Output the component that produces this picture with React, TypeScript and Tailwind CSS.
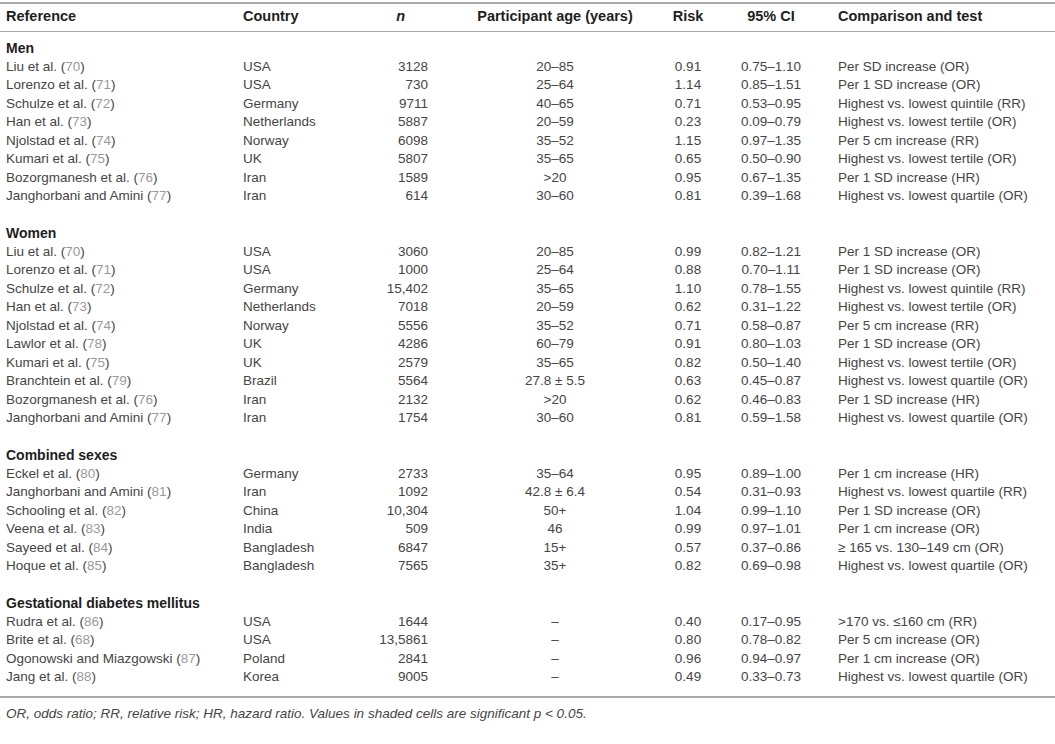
import React from "react";

type Row = [string, string, string, string, string, string, string, string];

const sections: { title: string; rows: Row[] }[] = [
  {
    title: "Men",
    rows: [
      ["Liu et al.", "70", "USA", "3128", "20–85", "0.91", "0.75–1.10", "Per SD increase (OR)"],
      ["Lorenzo et al.", "71", "USA", "730", "25–64", "1.14", "0.85–1.51", "Per 1 SD increase (OR)"],
      ["Schulze et al.", "72", "Germany", "9711", "40–65", "0.71", "0.53–0.95", "Highest vs. lowest quintile (RR)"],
      ["Han et al.", "73", "Netherlands", "5887", "20–59", "0.23", "0.09–0.79", "Highest vs. lowest tertile (OR)"],
      ["Njolstad et al.", "74", "Norway", "6098", "35–52", "1.15", "0.97–1.35", "Per 5 cm increase (RR)"],
      ["Kumari et al.", "75", "UK", "5807", "35–65", "0.65", "0.50–0.90", "Highest vs. lowest tertile (OR)"],
      ["Bozorgmanesh et al.", "76", "Iran", "1589", ">20", "0.95", "0.67–1.35", "Per 1 SD increase (HR)"],
      ["Janghorbani and Amini", "77", "Iran", "614", "30–60", "0.81", "0.39–1.68", "Highest vs. lowest quartile (OR)"],
    ],
  },
  {
    title: "Women",
    rows: [
      ["Liu et al.", "70", "USA", "3060", "20–85", "0.99", "0.82–1.21", "Per 1 SD increase (OR)"],
      ["Lorenzo et al.", "71", "USA", "1000", "25–64", "0.88", "0.70–1.11", "Per 1 SD increase (OR)"],
      ["Schulze et al.", "72", "Germany", "15,402", "35–65", "1.10", "0.78–1.55", "Highest vs. lowest quintile (RR)"],
      ["Han et al.", "73", "Netherlands", "7018", "20–59", "0.62", "0.31–1.22", "Highest vs. lowest tertile (OR)"],
      ["Njolstad et al.", "74", "Norway", "5556", "35–52", "0.71", "0.58–0.87", "Per 5 cm increase (RR)"],
      ["Lawlor et al.", "78", "UK", "4286", "60–79", "0.91", "0.80–1.03", "Per 1 SD increase (OR)"],
      ["Kumari et al.", "75", "UK", "2579", "35–65", "0.82", "0.50–1.40", "Highest vs. lowest tertile (OR)"],
      ["Branchtein et al.", "79", "Brazil", "5564", "27.8 ± 5.5", "0.63", "0.45–0.87", "Highest vs. lowest quartile (OR)"],
      ["Bozorgmanesh et al.", "76", "Iran", "2132", ">20", "0.62", "0.46–0.83", "Per 1 SD increase (HR)"],
      ["Janghorbani and Amini", "77", "Iran", "1754", "30–60", "0.81", "0.59–1.58", "Highest vs. lowest quartile (OR)"],
    ],
  },
  {
    title: "Combined sexes",
    rows: [
      ["Eckel et al.", "80", "Germany", "2733", "35–64", "0.95", "0.89–1.00", "Per 1 cm increase (HR)"],
      ["Janghorbani and Amini", "81", "Iran", "1092", "42.8 ± 6.4", "0.54", "0.31–0.93", "Highest vs. lowest quartile (RR)"],
      ["Schooling et al.", "82", "China", "10,304", "50+", "1.04", "0.99–1.10", "Per 1 SD increase (OR)"],
      ["Veena et al.", "83", "India", "509", "46", "0.99", "0.97–1.01", "Per 1 cm increase (OR)"],
      ["Sayeed et al.", "84", "Bangladesh", "6847", "15+", "0.57", "0.37–0.86", "≥ 165 vs. 130–149 cm (OR)"],
      ["Hoque et al.", "85", "Bangladesh", "7565", "35+", "0.82", "0.69–0.98", "Highest vs. lowest quartile (OR)"],
    ],
  },
  {
    title: "Gestational diabetes mellitus",
    rows: [
      ["Rudra et al.", "86", "USA", "1644", "–", "0.40", "0.17–0.95", ">170 vs. ≤160 cm (RR)"],
      ["Brite et al.", "68", "USA", "13,5861", "–", "0.80", "0.78–0.82", "Per 5 cm increase (OR)"],
      ["Ogonowski and Miazgowski", "87", "Poland", "2841", "–", "0.96", "0.94–0.97", "Per 1 cm increase (OR)"],
      ["Jang et al.", "88", "Korea", "9005", "–", "0.49", "0.33–0.73", "Highest vs. lowest quartile (OR)"],
    ],
  },
];

// row pitch in the reference is ~18.5px
const cell = "h-[18.5px] p-0 leading-[18.5px] align-middle whitespace-nowrap";

export default function App() {
  return (
    <div className="w-[1055px] h-[744px] bg-white pt-[2px] text-[13.5px] text-[#454545] font-['Liberation_Sans',Arial,sans-serif]">
      <table className="w-[1055px] table-fixed border-collapse">
        <colgroup>
          <col className="w-[237px]" />
          <col className="w-[103px]" />
          <col className="w-[120px]" />
          <col className="w-[190px]" />
          <col className="w-[76px]" />
          <col className="w-[90px]" />
          <col className="w-[239px]" />
        </colgroup>
        <thead>
          <tr className="h-[28px] border-t-2 border-b border-[#a9a9a9] font-bold text-[14.5px] text-[#1e1e1e] leading-[18px]">
            <th className="p-0 pb-[3px] pl-[6px] text-left">Reference</th>
            <th className="p-0 pb-[3px] pl-[6px] text-left">Country</th>
            <th className="p-0 pb-[3px] pr-[55px] text-right italic">n</th>
            <th className="p-0 pb-[3px] text-center">Participant age (years)</th>
            <th className="p-0 pb-[3px] text-center">Risk</th>
            <th className="p-0 pb-[3px] text-center">95% CI</th>
            <th className="p-0 pb-[3px] pl-[22px] text-left">Comparison and test</th>
          </tr>
        </thead>
        <tbody>
          <tr className="h-[8px]">
            <td colSpan={7} className="p-0" />
          </tr>
          {sections.map((s, si) => (
            <React.Fragment key={s.title}>
              {si > 0 && (
                <tr>
                  <td colSpan={7} className={cell} />
                </tr>
              )}
              <tr>
                <td colSpan={7} className={`${cell} pl-[6px] font-bold text-[14px] text-[#1e1e1e]`}>
                  {s.title}
                </td>
              </tr>
              {s.rows.map((r, i) => (
                <tr key={i}>
                  <td className={`${cell} pl-[6px]`}>
                    {r[0]} (<span className="text-[#9a9a9a]">{r[1]}</span>)
                  </td>
                  <td className={`${cell} pl-[6px]`}>{r[2]}</td>
                  <td className={`${cell} pr-[32px] text-right`}>{r[3]}</td>
                  <td className={`${cell} text-center`}>{r[4]}</td>
                  <td className={`${cell} text-center`}>{r[5]}</td>
                  <td className={`${cell} text-center`}>{r[6]}</td>
                  <td className={`${cell} pl-[22px]`}>{r[7]}</td>
                </tr>
              ))}
            </React.Fragment>
          ))}
          <tr className="h-[10px] border-b-2 border-[#a9a9a9]">
            <td colSpan={7} className="p-0" />
          </tr>
        </tbody>
      </table>
      <p className="pl-[6px] pt-[7px] leading-[18px] italic">
        OR, odds ratio; RR, relative risk; HR, hazard ratio. Values in shaded cells are significant p &lt; 0.05.
      </p>
    </div>
  );
}
